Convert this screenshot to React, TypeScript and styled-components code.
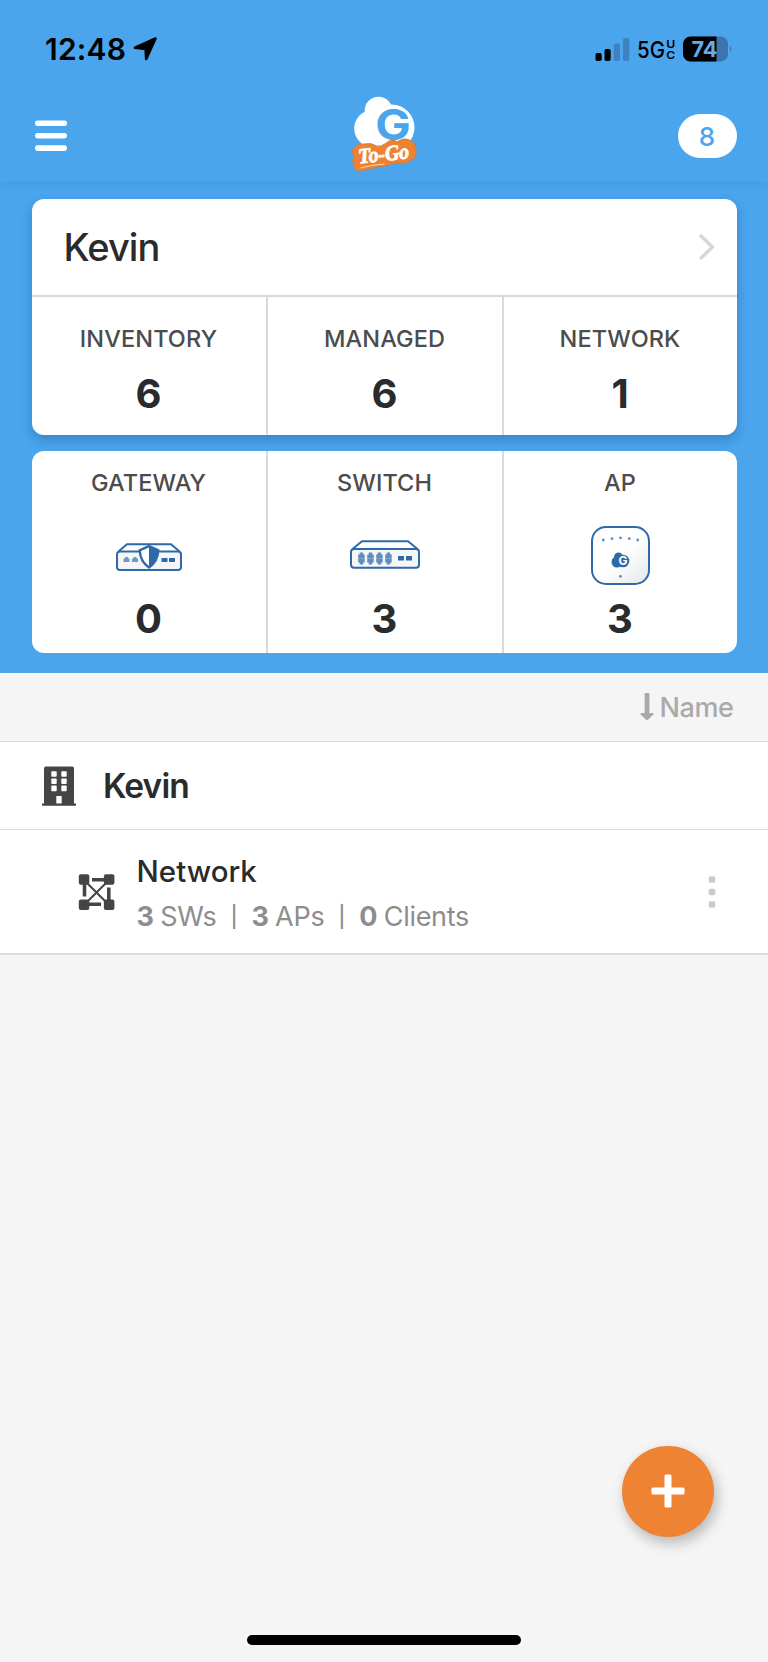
import React from 'react';
import styled, { createGlobalStyle } from 'styled-components';

const BLUE = '#4aa5ed';
const INK = '#2a2b2c';
const DEVICE = '#2f69a8';

const GlobalStyle = createGlobalStyle`
  * { box-sizing: border-box; }
  body { margin: 0; background: #f5f5f5; font-family: Inter, "Liberation Sans", sans-serif; }
  svg { display: block; flex: none; }
`;

const Screen = styled.div`
  width: 768px;
  height: 1662px;
  display: flex;
  flex-direction: column;
  background: #f5f5f5;
  overflow: hidden;
`;

const StatusBar = styled.div`
  height: 98px;
  padding: 0 35px 0 45px;
  display: flex;
  align-items: center;
  justify-content: space-between;
  color: #000;
`;

const Clock = styled.div`
  display: flex;
  align-items: center;
  gap: 6.5px;
  font-size: 30px;
  font-weight: 600;
  letter-spacing: 0.2px;
`;

const Indicators = styled.div`
  display: flex;
  align-items: center;
  gap: 7px;
`;

const Header = styled.header`
  height: 182px;
  background: ${BLUE};
  box-shadow: 0 1px 8px rgba(0, 40, 90, 0.1);
  position: relative;
`;

const NavBar = styled.div`
  height: 76px;
  padding: 0 31.5px 0 35px;
  display: grid;
  grid-template-columns: 1fr 76px 1fr;
  grid-template-rows: 76px;
  align-items: center;
`;

const Badge = styled.div`
  justify-self: end;
  width: 59px;
  height: 44px;
  border-radius: 22px;
  background: #fff;
  color: ${BLUE};
  font-size: 26px;
  line-height: 45px;
  font-weight: 500;
  text-align: center;
`;

const Summary = styled.section`
  height: 491px;
  padding: 17px 31.5px 0;
  background: ${BLUE};
  display: flex;
  flex-direction: column;
  gap: 16px;
`;

const Card = styled.div<{ $raised?: boolean }>`
  border-radius: 12px;
  background: #fff;
  overflow: hidden;
  box-shadow: ${(p) => (p.$raised ? '0 5px 12px rgba(0, 30, 70, 0.24)' : 'none')};
`;

const CardTitle = styled.div`
  height: 98px;
  padding: 0 22px 0 32px;
  border-bottom: 2px solid #dadada;
  display: flex;
  align-items: center;
  justify-content: space-between;
  color: ${INK};
  font-size: 38px;
  font-weight: 500;
  letter-spacing: -0.9px;
`;

const Cells = styled.div`
  display: grid;
  grid-template-columns: 234px 236px 1fr;
`;

const Cell = styled.div<{ $tall?: boolean }>`
  height: ${(p) => (p.$tall ? 202 : 138)}px;
  padding-top: ${(p) => (p.$tall ? 17 : 27)}px;
  display: flex;
  flex-direction: column;
  align-items: center;
  & + & { border-left: 2px solid #dadada; }
`;

const Label = styled.div`
  color: #4b4c4d;
  font-size: 23.5px;
  line-height: 30px;
  font-weight: 500;
  letter-spacing: 0.1px;
`;

const Figure = styled.div`
  margin-top: 16px;
  color: ${INK};
  font-size: 40px;
  line-height: 48px;
  font-weight: 700;
`;

const DeviceSlot = styled.div`
  height: 60px;
  margin-top: 27px;
  display: flex;
  align-items: center;
  & + ${Figure} { margin-top: 10px; }
`;

const SortBar = styled.div`
  height: 69px;
  padding-right: 34.5px;
  border-bottom: 1.5px solid #dcdcdc;
  display: flex;
  align-items: center;
  justify-content: flex-end;
  gap: 6px;
  color: #aaaaaa;
  font-size: 27px;
  font-weight: 500;
  letter-spacing: -0.4px;
`;

const SiteRow = styled.div`
  height: 88px;
  padding-left: 42px;
  border-bottom: 1.5px solid #dcdcdc;
  background: #fff;
  display: flex;
  align-items: center;
  gap: 27px;
  color: ${INK};
  font-size: 33.5px;
  font-weight: 600;
  letter-spacing: -0.9px;
`;

const NetworkRow = styled.div`
  height: 125px;
  padding: 0 52.5px 0 78px;
  border-bottom: 2px solid #dcdcdc;
  background: #fff;
  display: flex;
  align-items: center;
`;

const NetworkInfo = styled.div`
  flex: 1;
  padding: 4px 0 0 21.5px;
`;

const NetworkName = styled.div`
  color: ${INK};
  font-size: 29.5px;
  line-height: 46px;
  font-weight: 500;
`;

const Counts = styled.div`
  display: flex;
  gap: 14px;
  color: #8d8d8d;
  font-size: 27px;
  line-height: 46px;
  font-weight: 400;
  letter-spacing: -0.3px;
  word-spacing: -0.8px;
  b { font-weight: 700; }
`;

const Divider = styled.span`
  font-size: 21px;
  font-weight: 500;
`;

const Bottom = styled.div`
  flex: 1;
  padding: 0 54.5px 17px;
  display: flex;
  flex-direction: column;
  justify-content: flex-end;
  align-items: flex-end;
`;

const AddButton = styled.button`
  width: 91.5px;
  height: 91.5px;
  margin-bottom: 98px;
  padding: 0;
  border: 0;
  border-radius: 50%;
  background: #ee8433;
  box-shadow: 3px 6px 14px rgba(0, 0, 0, 0.26);
  display: flex;
  align-items: center;
  justify-content: center;
`;

const HomeBar = styled.div`
  align-self: center;
  width: 274px;
  height: 10px;
  border-radius: 5px;
  background: #000;
`;

const LocationArrow = () => (
  <svg width="24" height="24" viewBox="0 0 24 24">
    <path d="M22.5 1.5 L13.2 22 L12.6 12 L2 10.8 Z" fill="#000" stroke="#000" strokeWidth="2.6" strokeLinejoin="round" />
  </svg>
);

const Signal = () => (
  <svg width="35" height="24" viewBox="0 0 35 24">
    <rect x="0.5" y="16" width="6.2" height="8" rx="1.8" />
    <rect x="9.5" y="12" width="6.2" height="12" rx="1.8" />
    <rect x="18.8" y="6.5" width="6.2" height="17.5" rx="1.8" fill="#3f82c0" />
    <rect x="28" y="1" width="6.2" height="23" rx="1.8" fill="#3f82c0" />
  </svg>
);

const Carrier = () => (
  <svg width="39" height="34" viewBox="0 0 39 34" fontFamily="Inter, sans-serif">
    <text x="0" y="26" fontSize="23.5" fontWeight="500" textLength="28" lengthAdjust="spacingAndGlyphs">5G</text>
    <text x="29.2" y="16" fontSize="10.5" fontWeight="600" textLength="9" lengthAdjust="spacingAndGlyphs">U</text>
    <text x="29.2" y="26.5" fontSize="10.5" fontWeight="600" textLength="9" lengthAdjust="spacingAndGlyphs">C</text>
  </svg>
);

const Battery = () => (
  <svg width="50" height="26" viewBox="0 0 50 26" fontFamily="Inter, sans-serif">
    <rect x="0" y="0.5" width="45" height="25" rx="7.5" fill="#3c74ae" />
    <path d="M33.5 0.5 H7.5 A7.5 7.5 0 0 0 0 8 V18 A7.5 7.5 0 0 0 7.5 25.5 H33.5 Z" />
    <path d="M47 10 Q50 13 47 16 Z" fill="#3c74ae" />
    <text x="8.5" y="20.6" fontSize="21.5" fontWeight="700" fill="#62adea" textLength="26" lengthAdjust="spacingAndGlyphs">74</text>
  </svg>
);

const MenuIcon = () => (
  <svg width="32" height="32" viewBox="0 0 32 32" fill="#fff">
    <rect y="0.5" width="32" height="5.6" rx="2.4" />
    <rect y="12.9" width="32" height="5.6" rx="2.4" />
    <rect y="25.3" width="32" height="5.6" rx="2.4" />
  </svg>
);

const Logo = () => (
  <svg width="76" height="84" viewBox="347.5 93.5 76 84" fontFamily="Inter, sans-serif">
    <g fill="#fff">
      <circle cx="378" cy="110" r="13.8" />
      <circle cx="372" cy="128" r="18.3" />
      <circle cx="391" cy="127" r="23" />
      <rect x="360" y="130" width="48" height="18" rx="8" />
    </g>
    <text x="374.8" y="139.5" fontSize="42" fontWeight="700" fill={BLUE} textLength="35.5" lengthAdjust="spacingAndGlyphs">G</text>
    <path
      d="M354 147 Q357 143 364 143.5 Q371 142 376 145.500 Q381 146.500 385 143 Q390 138 397 141 Q403 137 408 139 Q416 142 415.5 151 Q416 158 409 161 Q401 164 395 162 Q388 166 379 166 L362 170 Q354 172 353 164 Q351 160 354 157 Q350 151 354 147 Z"
      fill="#ed8231"
      stroke="#d87d3b"
      strokeWidth="1"
    />
    <text x="358.5" y="163" fontSize="21.5" fontWeight="700" fontStyle="italic" fontFamily="Liberation Serif, serif" fill="#fff" stroke="#fff" strokeWidth="0.8" textLength="51" lengthAdjust="spacingAndGlyphs" transform="rotate(-6 359 163)">To-Go</text>
    <path d="M360 167.5 Q370 164.5 384 163.5" fill="none" stroke="#fff" strokeOpacity="0.7" strokeWidth="1" />
  </svg>
);

const Chevron = () => (
  <svg width="17" height="28" viewBox="0 0 17 28">
    <path d="M2 2 L14.5 14 L2 26" fill="none" stroke="#d6d7d8" strokeWidth="3.4" />
  </svg>
);

const GatewayIcon = () => (
  <svg width="66" height="33" viewBox="0 -4 66 33">
    <path d="M2.5 8.5 L11 1.2 H55 L63.5 8.5" fill="#fff" stroke={DEVICE} strokeWidth="2" />
    <rect x="1" y="8.5" width="64" height="18.5" rx="3" fill="#f5f6f8" stroke={DEVICE} strokeWidth="2" />
    <path d="M7.5 19 V15.5 H9 V14 H12 V15.5 H13.5 V19 Z M16 19 V15.5 H17.5 V14 H20.5 V15.5 H22 V19 Z" fill="#6f98c5" />
    <path d="M45.5 15 H51.5 V19 H45.5 Z M53 15 H59 V19 H53 Z" fill={DEVICE} />
    <path d="M33 1.8 L43.5 6.5 Q43.5 19 33 26 Q22.5 19 22.5 6.5 Z" fill={DEVICE} />
    <path d="M33 4.5 L25 8 Q25.5 17.5 33 23 Z" fill="#fff" />
  </svg>
);

const SwitchIcon = () => (
  <svg width="70" height="30" viewBox="0 0 70 30">
    <path d="M2.5 9 L12 1.2 H58 L67.5 9" fill="#fff" stroke={DEVICE} strokeWidth="2" />
    <rect x="1" y="9" width="68" height="18.7" rx="3" fill="#f5f6f8" stroke={DEVICE} strokeWidth="2" />
    {[8.2, 17.2, 26.2, 35.2].map((x) => (
      <path key={x} transform={`translate(${x} 12.5)`} d="M0 2 H1.5 V0 H5 V2 H6.5 V5.7 H0 Z M0 6.1 H6.5 V10 H5 V12 H1.5 V10 H0 Z" fill="#5f8dbf" />
    ))}
    <path d="M48 16 H54 V20.5 H48 Z M56 16 H62 V20.5 H56 Z" fill={DEVICE} />
  </svg>
);

const AccessPointIcon = () => (
  <svg width="59" height="59" viewBox="0 0 59 59" fontFamily="Inter, sans-serif">
    <defs>
      <linearGradient id="apBody" x1="0" y1="0" x2="1" y2="1">
        <stop offset="0.5" stopColor="#fff" />
        <stop offset="1" stopColor="#e4e6e9" />
      </linearGradient>
    </defs>
    <rect x="1" y="1" width="57" height="57" rx="14" fill="url(#apBody)" stroke={DEVICE} strokeWidth="2" />
    <g fill="#5f8dbf">
      <circle cx="12.3" cy="14" r="1.4" />
      <circle cx="21" cy="12.7" r="1.4" />
      <circle cx="29.5" cy="11.8" r="1.4" />
      <circle cx="38.3" cy="12.7" r="1.4" />
      <circle cx="46.7" cy="14" r="1.4" />
      <circle cx="29.5" cy="50.3" r="1.4" />
    </g>
    <g fill={DEVICE}>
      <circle cx="27.5" cy="31" r="4.5" />
      <circle cx="26" cy="36" r="5.5" />
      <circle cx="32" cy="35" r="6.3" />
    </g>
    <text x="27.5" y="39.3" fontSize="12" fontWeight="700" fill="#fff">G</text>
  </svg>
);

const SortArrow = () => (
  <svg width="14" height="28" viewBox="0 0 14 28" fill="#aaaaaa">
    <rect x="4.6" y="0" width="4.8" height="22" rx="1" />
    <path d="M1.5 21 H12.5 L7 26.3 Z" stroke="#aaaaaa" strokeWidth="2" strokeLinejoin="round" />
  </svg>
);

const BuildingIcon = () => (
  <svg width="34" height="40" viewBox="0 0 34 40">
    <path d="M4 0.5 H30 Q32 0.5 32 2.5 V37.5 H34 V39.8 H0 V37.5 H2 V2.5 Q2 0.5 4 0.5 Z" fill="#454545" />
    <g fill="#fff">
      {[5.2, 12.4, 19.6].map((y) => (
        <React.Fragment key={y}>
          <rect x="9.3" y={y} width="5.4" height="5.6" rx="0.8" />
          <rect x="19.3" y={y} width="5.4" height="5.6" rx="0.8" />
        </React.Fragment>
      ))}
      <rect x="14.3" y="30" width="5.4" height="7.6" rx="0.6" />
    </g>
  </svg>
);

const TopologyIcon = () => (
  <svg width="37" height="36" viewBox="0 0 37 36">
    <g stroke="#454545" fill="none">
      <path d="M6 6 L31 31 M31 6 L6 31" strokeWidth="2" />
      <path d="M14 5.8 H28 M6.5 9 V22.5 M30.8 13.5 V28 M9 30.2 H23" strokeWidth="3.6" />
    </g>
    <g fill="#454545">
      <rect x="0.8" y="0.3" width="10.5" height="10.5" rx="2" />
      <rect x="25.9" y="0.3" width="10.5" height="10.5" rx="2" />
      <rect x="0.8" y="25.4" width="10.5" height="10.5" rx="2" />
      <rect x="25.9" y="25.4" width="10.5" height="10.5" rx="2" />
    </g>
  </svg>
);

const MoreIcon = () => (
  <svg width="8" height="34" viewBox="0 0 8 34" fill="#c9cacd">
    <rect x="0.7" y="1.2" width="6.6" height="6.6" rx="2" />
    <rect x="0.7" y="13.7" width="6.6" height="6.6" rx="2" />
    <rect x="0.7" y="26.2" width="6.6" height="6.6" rx="2" />
  </svg>
);

const PlusIcon = () => (
  <svg width="34" height="34" viewBox="0 0 34 34" fill="#fff">
    <rect x="0.5" y="13.5" width="33" height="7" rx="1.5" />
    <rect x="13.5" y="0.5" width="7" height="33" rx="1.5" />
  </svg>
);

const totals = [
  { label: 'INVENTORY', value: 6 },
  { label: 'MANAGED', value: 6 },
  { label: 'NETWORK', value: 1 },
];

const devices = [
  { label: 'GATEWAY', value: 0, icon: <GatewayIcon /> },
  { label: 'SWITCH', value: 3, icon: <SwitchIcon /> },
  { label: 'AP', value: 3, icon: <AccessPointIcon /> },
];

export default function App() {
  return (
    <Screen>
      <GlobalStyle />
      <Header>
        <StatusBar>
          <Clock>12:48<LocationArrow /></Clock>
          <Indicators>
            <Signal />
            <Carrier />
            <Battery />
          </Indicators>
        </StatusBar>
        <NavBar>
          <MenuIcon />
          <Logo />
          <Badge>8</Badge>
        </NavBar>
      </Header>
      <Summary>
        <Card $raised>
          <CardTitle>Kevin<Chevron /></CardTitle>
          <Cells>
            {totals.map((t) => (
              <Cell key={t.label}>
                <Label>{t.label}</Label>
                <Figure>{t.value}</Figure>
              </Cell>
            ))}
          </Cells>
        </Card>
        <Card>
          <Cells>
            {devices.map((d) => (
              <Cell key={d.label} $tall>
                <Label>{d.label}</Label>
                <DeviceSlot>{d.icon}</DeviceSlot>
                <Figure>{d.value}</Figure>
              </Cell>
            ))}
          </Cells>
        </Card>
      </Summary>
      <SortBar><SortArrow />Name</SortBar>
      <SiteRow><BuildingIcon />Kevin</SiteRow>
      <NetworkRow>
        <TopologyIcon />
        <NetworkInfo>
          <NetworkName>Network</NetworkName>
          <Counts>
            <span><b>3</b> SWs</span>
            <Divider>|</Divider>
            <span><b>3</b> APs</span>
            <Divider>|</Divider>
            <span><b>0</b> Clients</span>
          </Counts>
        </NetworkInfo>
        <MoreIcon />
      </NetworkRow>
      <Bottom>
        <AddButton aria-label="Add"><PlusIcon /></AddButton>
        <HomeBar />
      </Bottom>
    </Screen>
  );
}
